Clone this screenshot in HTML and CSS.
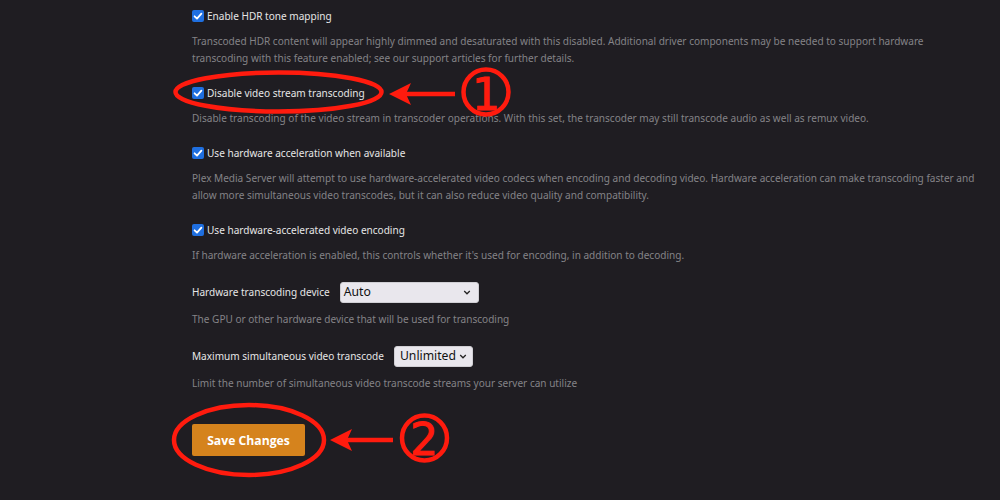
FILE: index.html
```html
<!DOCTYPE html>
<html>
<head>
<meta charset="utf-8">
<link rel="stylesheet" href="styles.css">
</head>
<body>
<div class="page">
  <div class="settings">
    <div class="setting">
      <div class="check-row"><span class="box"><svg viewBox="0 0 12 12"><path d="M2.6 6.3 L5 8.6 L9.4 3.6" /></svg></span><span class="label">Enable HDR tone mapping</span></div>
      <div class="desc">Transcoded HDR content will appear highly dimmed and desaturated with this disabled. Additional driver components may be needed to support hardware<br>transcoding with this feature enabled; see our support articles for further details.</div>
    </div>
    <div class="setting">
      <div class="check-row"><span class="box"><svg viewBox="0 0 12 12"><path d="M2.6 6.3 L5 8.6 L9.4 3.6" /></svg></span><span class="label">Disable video stream transcoding</span></div>
      <div class="desc">Disable transcoding of the video stream in transcoder operations. With this set, the transcoder may still transcode audio as well as remux video.</div>
    </div>
    <div class="setting">
      <div class="check-row"><span class="box"><svg viewBox="0 0 12 12"><path d="M2.6 6.3 L5 8.6 L9.4 3.6" /></svg></span><span class="label">Use hardware acceleration when available</span></div>
      <div class="desc">Plex Media Server will attempt to use hardware-accelerated video codecs when encoding and decoding video. Hardware acceleration can make transcoding faster and<br>allow more simultaneous video transcodes, but it can also reduce video quality and compatibility.</div>
    </div>
    <div class="setting">
      <div class="check-row"><span class="box"><svg viewBox="0 0 12 12"><path d="M2.6 6.3 L5 8.6 L9.4 3.6" /></svg></span><span class="label">Use hardware-accelerated video encoding</span></div>
      <div class="desc">If hardware acceleration is enabled, this controls whether it's used for encoding, in addition to decoding.</div>
    </div>
    <div class="setting">
      <div class="select-row"><span class="label">Hardware transcoding device</span><span class="select select-wide"><span class="select-text">Auto</span><svg class="chev" viewBox="0 0 10 6"><path d="M1.5 1.2 L5 4.6 L8.5 1.2" /></svg></span></div>
      <div class="desc">The GPU or other hardware device that will be used for transcoding</div>
    </div>
    <div class="setting">
      <div class="select-row"><span class="label">Maximum simultaneous video transcode</span><span class="select"><span class="select-text">Unlimited</span><svg class="chev" viewBox="0 0 10 6"><path d="M1.5 1.2 L5 4.6 L8.5 1.2" /></svg></span></div>
      <div class="desc">Limit the number of simultaneous video transcode streams your server can utilize</div>
    </div>
    <div class="actions">
      <button class="save">Save Changes</button>
    </div>
  </div>
  <svg class="annot" viewBox="0 0 1000 500" width="1000" height="500">
    <ellipse cx="278.5" cy="92" rx="103" ry="19.5" />
    <line x1="406" y1="94" x2="455" y2="94" />
    <path class="head" d="M389 94 L411 83 L406 94 L411 105 Z" />
    <circle cx="486" cy="92" r="22.5" />
    <text x="486" y="110">1</text>
    <ellipse cx="249" cy="440" rx="75" ry="35" />
    <line x1="346" y1="440" x2="393" y2="440" />
    <path class="head" d="M330 440 L352 429 L347 440 L352 451 Z" />
    <circle cx="424.5" cy="438" r="22.5" />
    <text x="424" y="455">2</text>
  </svg>
</div>
</body>
</html>
```
FILE: styles.css
```css
html, body {
  margin: 0;
  padding: 0;
  background: #1f1d22;
}
.page {
  position: relative;
  width: 1000px;
  height: 500px;
  overflow: hidden;
  background: #1f1d22;
  font-family: "Noto Sans", "Open Sans", sans-serif;
}
.settings {
  padding: 8px 0 0 192px;
  display: flex;
  flex-direction: column;
  gap: 18px;
}
.setting {
  display: flex;
  flex-direction: column;
  gap: 9px;
}
.check-row {
  display: flex;
  align-items: center;
  height: 16px;
}
.box {
  width: 12px;
  height: 12px;
  border-radius: 2px;
  background: #1f6fe0;
  margin-right: 3px;
  display: flex;
}
.box svg {
  width: 12px;
  height: 12px;
}
.box path {
  fill: none;
  stroke: #ffffff;
  stroke-width: 1.8;
  stroke-linecap: round;
  stroke-linejoin: round;
}
.label {
  color: #e6e6e6;
  font-size: 10.05px;
  line-height: 16px;
}
.desc {
  color: #848387;
  font-size: 10.05px;
  line-height: 17px;
}
.select-row {
  display: flex;
  align-items: center;
  height: 20px;
  gap: 10px;
}
.select {
  display: flex;
  align-items: center;
  justify-content: space-between;
  height: 21px;
  box-sizing: border-box;
  padding: 0 5px 0 5px;
  background: #e9e7ed;
  border: 1px solid #d0cfd4;
  border-radius: 3px;
  width: 79px;
}
.select-wide {
  width: 139px;
  padding-left: 3px;
  padding-right: 7px;
}
.select-text {
  color: #111;
  font-size: 12.2px;
  line-height: 18px;
}
.chev {
  width: 8px;
  height: 5px;
}
.chev path {
  fill: none;
  stroke: #222;
  stroke-width: 1.6;
}
.actions {
  padding-top: 14px;
}
.save {
  width: 113px;
  height: 32px;
  background: #d5831d;
  color: #fff;
  border: none;
  border-radius: 2px;
  font-family: "Open Sans", sans-serif;
  font-weight: 700;
  font-size: 12.2px;
  padding: 0;
}
.annot {
  position: absolute;
  left: 0;
  top: 0;
  pointer-events: none;
}
.annot ellipse, .annot circle, .annot line {
  fill: none;
  stroke: #ff1b0e;
  stroke-width: 4.5;
}
.annot .head {
  fill: #ff1b0e;
  stroke: none;
}
.annot text {
  fill: #ff1b0e;
  stroke: #ff1b0e;
  stroke-width: 1;
  font-family: "DejaVu Sans", sans-serif;
  font-size: 44px;
  text-anchor: middle;
}
```
